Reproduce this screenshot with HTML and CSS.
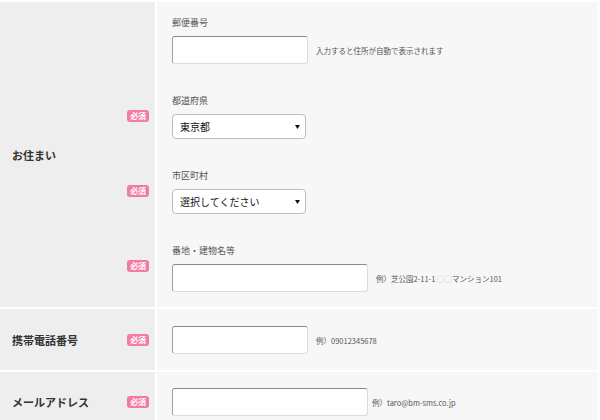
FILE: index.html
```html
<!DOCTYPE html>
<html lang="ja">
<head>
<meta charset="utf-8">
<title>フォーム</title>
<link rel="stylesheet" href="styles.css">
</head>
<body>
<div class="form">
  <div class="row">
    <div class="head head-tall"><span class="head-label">お住まい</span></div>
    <div class="body body-stack">
      <div class="field">
        <div class="field-label">郵便番号</div>
        <div class="control-line">
          <div class="input input-short"></div>
          <span class="hint">入力すると住所が自動で表示されます</span>
        </div>
      </div>
      <div class="field">
        <span class="badge badge-float">必須</span>
        <div class="field-label">都道府県</div>
        <div class="control-line">
          <div class="select"><span>東京都</span><svg class="caret" width="5" height="4" viewBox="0 0 5 4"><path d="M0 0H5L2.5 4Z" fill="#111"/></svg></div>
        </div>
      </div>
      <div class="field">
        <span class="badge badge-float">必須</span>
        <div class="field-label">市区町村</div>
        <div class="control-line">
          <div class="select"><span>選択してください</span><svg class="caret" width="5" height="4" viewBox="0 0 5 4"><path d="M0 0H5L2.5 4Z" fill="#111"/></svg></div>
        </div>
      </div>
      <div class="field">
        <span class="badge badge-float">必須</span>
        <div class="field-label">番地・建物名等</div>
        <div class="control-line">
          <div class="input input-long"></div>
          <span class="hint">例）芝公園2-11-1 <span class="hint-faint">○○</span>マンション101</span>
        </div>
      </div>
    </div>
  </div>
  <div class="row">
    <div class="head"><span class="head-label">携帯電話番号</span><span class="badge">必須</span></div>
    <div class="body body-single body-phone">
      <div class="control-line">
        <div class="input input-short"></div>
        <span class="hint">例）09012345678</span>
      </div>
    </div>
  </div>
  <div class="row">
    <div class="head"><span class="head-label">メールアドレス</span><span class="badge">必須</span></div>
    <div class="body body-single">
      <div class="control-line">
        <div class="input input-long"></div>
        <span class="hint hint-near">例）taro@bm-sms.co.jp</span>
      </div>
    </div>
  </div>
</div>
</body>
</html>
```

FILE: styles.css
```css
* { box-sizing: border-box; }
html, body { margin: 0; padding: 0; background: #ffffff; }
body {
  font-family: "Noto Sans CJK JP", "Noto Sans", sans-serif;
  color: #333;
  width: 600px;
  height: 420px;
  overflow: hidden;
}
.form {
  width: 598px;
  border-top: 2px solid #ffffff;
}
.row {
  display: flex;
  border-bottom: 2px solid #ffffff;
}
.head {
  width: 157px;
  flex: none;
  background: #eeeeee;
  border-right: 2px solid #ffffff;
  display: flex;
  align-items: center;
  justify-content: space-between;
  padding: 0 6px 0 12px;
}
.head-label {
  font-size: 11px;
  font-weight: bold;
  color: #333;
  line-height: 14px;
}
.body {
  flex: 1;
  background: #f7f7f7;
  padding-left: 15px;
}
.body-stack {
  display: flex;
  flex-direction: column;
  gap: 30px;
  padding-top: 14px;
  padding-bottom: 15px;
}
.body-single {
  padding-top: 16px;
  padding-bottom: 16px;
}
.body-phone { padding-top: 17px; }
.field { position: relative; }
.field-label {
  font-size: 9px;
  line-height: 14px;
  color: #555;
  margin-bottom: 6px;
}
.control-line {
  display: flex;
  align-items: center;
}
.input {
  height: 28px;
  background: #fff;
  border: 1px solid #dcdcdc;
  border-top-color: #8a8a8a;
  border-left-color: #a0a0a0;
  border-radius: 3px;
}
.input-short { width: 136px; }
.input-long { width: 196px; }
.select {
  width: 134px;
  height: 25px;
  background: #fff;
  border: 1px solid #bdbdbd;
  border-radius: 4px;
  display: flex;
  align-items: center;
  justify-content: space-between;
  padding: 0 5px 0 7px;
  font-size: 10px;
  color: #111;
}
.caret { display: block; }
.hint {
  font-size: 7.5px;
  color: #555;
  margin-left: 8px;
  white-space: nowrap;
}
.hint-near { margin-left: 4px; }
.hint-faint { color: #c4c4c4; }
.badge {
  display: inline-block;
  width: 22px;
  height: 12px;
  line-height: 12px;
  text-align: center;
  background: #f27ca0;
  color: #fff;
  font-size: 8px;
  font-weight: bold;
  border-radius: 3px;
  letter-spacing: -0.3px;
}
.badge-float {
  position: absolute;
  left: -45px;
  top: 16px;
}
```
